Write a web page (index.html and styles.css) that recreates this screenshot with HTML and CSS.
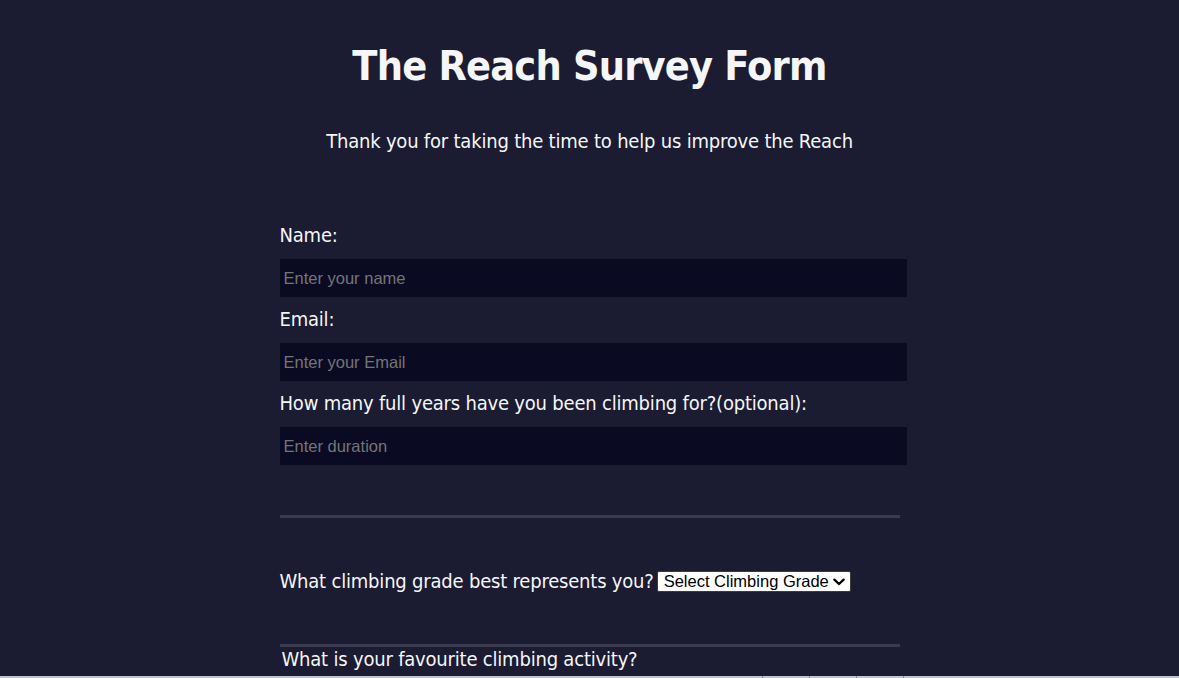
FILE: index.html
```html
<!DOCTYPE html>
<html lang="en">
<head>
<meta charset="utf-8">
<title>The Reach Survey Form</title>
<link rel="stylesheet" href="styles.css">
</head>
<body>
  <main class="page">
    <h1 class="title">The Reach Survey Form</h1>
    <p class="subtitle">Thank you for taking the time to help us improve the Reach</p>
    <form class="survey">
      <fieldset class="group">
        <label class="field-label" for="name">Name:</label>
        <input class="text-input" id="name" type="text" placeholder="Enter your name">
        <label class="field-label" for="email">Email:</label>
        <input class="text-input" id="email" type="email" placeholder="Enter your Email">
        <label class="field-label" for="years">How many full years have you been climbing for?(optional):</label>
        <input class="text-input" id="years" type="number" placeholder="Enter duration">
      </fieldset>
      <fieldset class="group group-grade">
        <label class="inline-label" for="grade">What climbing grade best represents you?</label>
        <span class="select-wrap">
          <select class="grade-select" id="grade">
            <option>Select Climbing Grade</option>
            <option>Beginner</option>
            <option>Intermediate</option>
            <option>Advanced</option>
          </select>
          <svg class="select-chevron" width="12" height="8" viewBox="0 0 12 8" aria-hidden="true">
            <path d="M1.4 1.6 L6 6 L10.6 1.6" fill="none" stroke="#000" stroke-width="2.3" stroke-linecap="round" stroke-linejoin="round"/>
          </svg>
        </span>
      </fieldset>
      <fieldset class="group group-activity">
        <legend class="activity-legend">What is your favourite climbing activity?</legend>
        <label class="radio-label"><input type="radio" name="activity"> Bouldering</label>
        <label class="radio-label"><input type="radio" name="activity"> Top rope</label>
        <label class="radio-label"><input type="radio" name="activity"> Lead</label>
      </fieldset>
    </form>
  </main>
  <div class="frame-edge">
    <span class="edge-seg"></span>
    <span class="edge-seg"></span>
    <span class="edge-seg"></span>
    <span class="edge-seg"></span>
  </div>
</body>
</html>
```
FILE: styles.css
```css
html, body {
  margin: 0;
  padding: 0;
}

body {
  background: #1b1b32;
  color: #f5f6f7;
  font-family: "DejaVu Sans Condensed", "DejaVu Sans", sans-serif;
  font-stretch: condensed;
  font-size: 20px;
  letter-spacing: -0.2px;
  min-height: 100vh;
}

.page {
  display: flex;
  flex-direction: column;
  align-items: center;
  padding-top: 1px;
}

.title {
  margin: 38px 0 0;
  font-size: 41px;
  line-height: 54px;
  font-weight: bold;
  letter-spacing: -0.8px;
  text-align: center;
}

.subtitle {
  margin: 36px 0 0;
  font-size: 20px;
  line-height: 24px;
  text-align: center;
}

.survey {
  width: 620px;
  margin-top: 70px;
  padding-bottom: 300px;
}

.group {
  border: none;
  border-bottom: 3px solid #3b3b4f;
  margin: 0;
  padding: 0 0 50px;
  display: flex;
  flex-direction: column;
  min-width: 0;
}

.field-label {
  display: block;
  line-height: 24px;
  margin: 0;
}

.text-input {
  box-sizing: border-box;
  width: 627px;
  height: 38px;
  margin: 12px 0 10px;
  padding: 0 4px;
  border: none;
  background: #0a0a23;
  color: #f5f6f7;
  font-family: "Liberation Sans", Arial, sans-serif;
  font-stretch: normal;
  font-size: 16.5px;
  letter-spacing: 0;
  outline: none;
}

.text-input::placeholder {
  color: #757575;
}

.text-input:last-child {
  margin-bottom: 0;
}

.group-grade {
  flex-direction: row;
  align-items: center;
  padding: 51px 0 51px;
}

.inline-label {
  line-height: 24px;
}

.select-wrap {
  position: relative;
  display: inline-flex;
  margin-left: 3px;
}

.grade-select {
  box-sizing: border-box;
  appearance: none;
  -webkit-appearance: none;
  width: 194px;
  height: 21px;
  margin: 0;
  padding: 0 0 0 6px;
  font-family: "Liberation Sans", Arial, sans-serif;
  font-stretch: normal;
  font-size: 16.5px;
  line-height: 19px;
  letter-spacing: 0;
  background: #ffffff;
  color: #000000;
  border: 1px solid #3c3c3c;
  border-radius: 2px;
}

.select-chevron {
  position: absolute;
  right: 6px;
  top: 7px;
  pointer-events: none;
}

.group-activity {
  border-bottom: none;
}

.activity-legend {
  padding: 0 2px;
  line-height: 24px;
}

.radio-label {
  line-height: 30px;
}

.frame-edge {
  position: fixed;
  left: 0;
  right: 0;
  bottom: 0;
  height: 2px;
  background: #c4c4c4;
  display: flex;
  padding-left: 762px;
  gap: 46px;
}

.edge-seg {
  width: 1px;
  height: 2px;
  background: #8a8a8a;
}
```
